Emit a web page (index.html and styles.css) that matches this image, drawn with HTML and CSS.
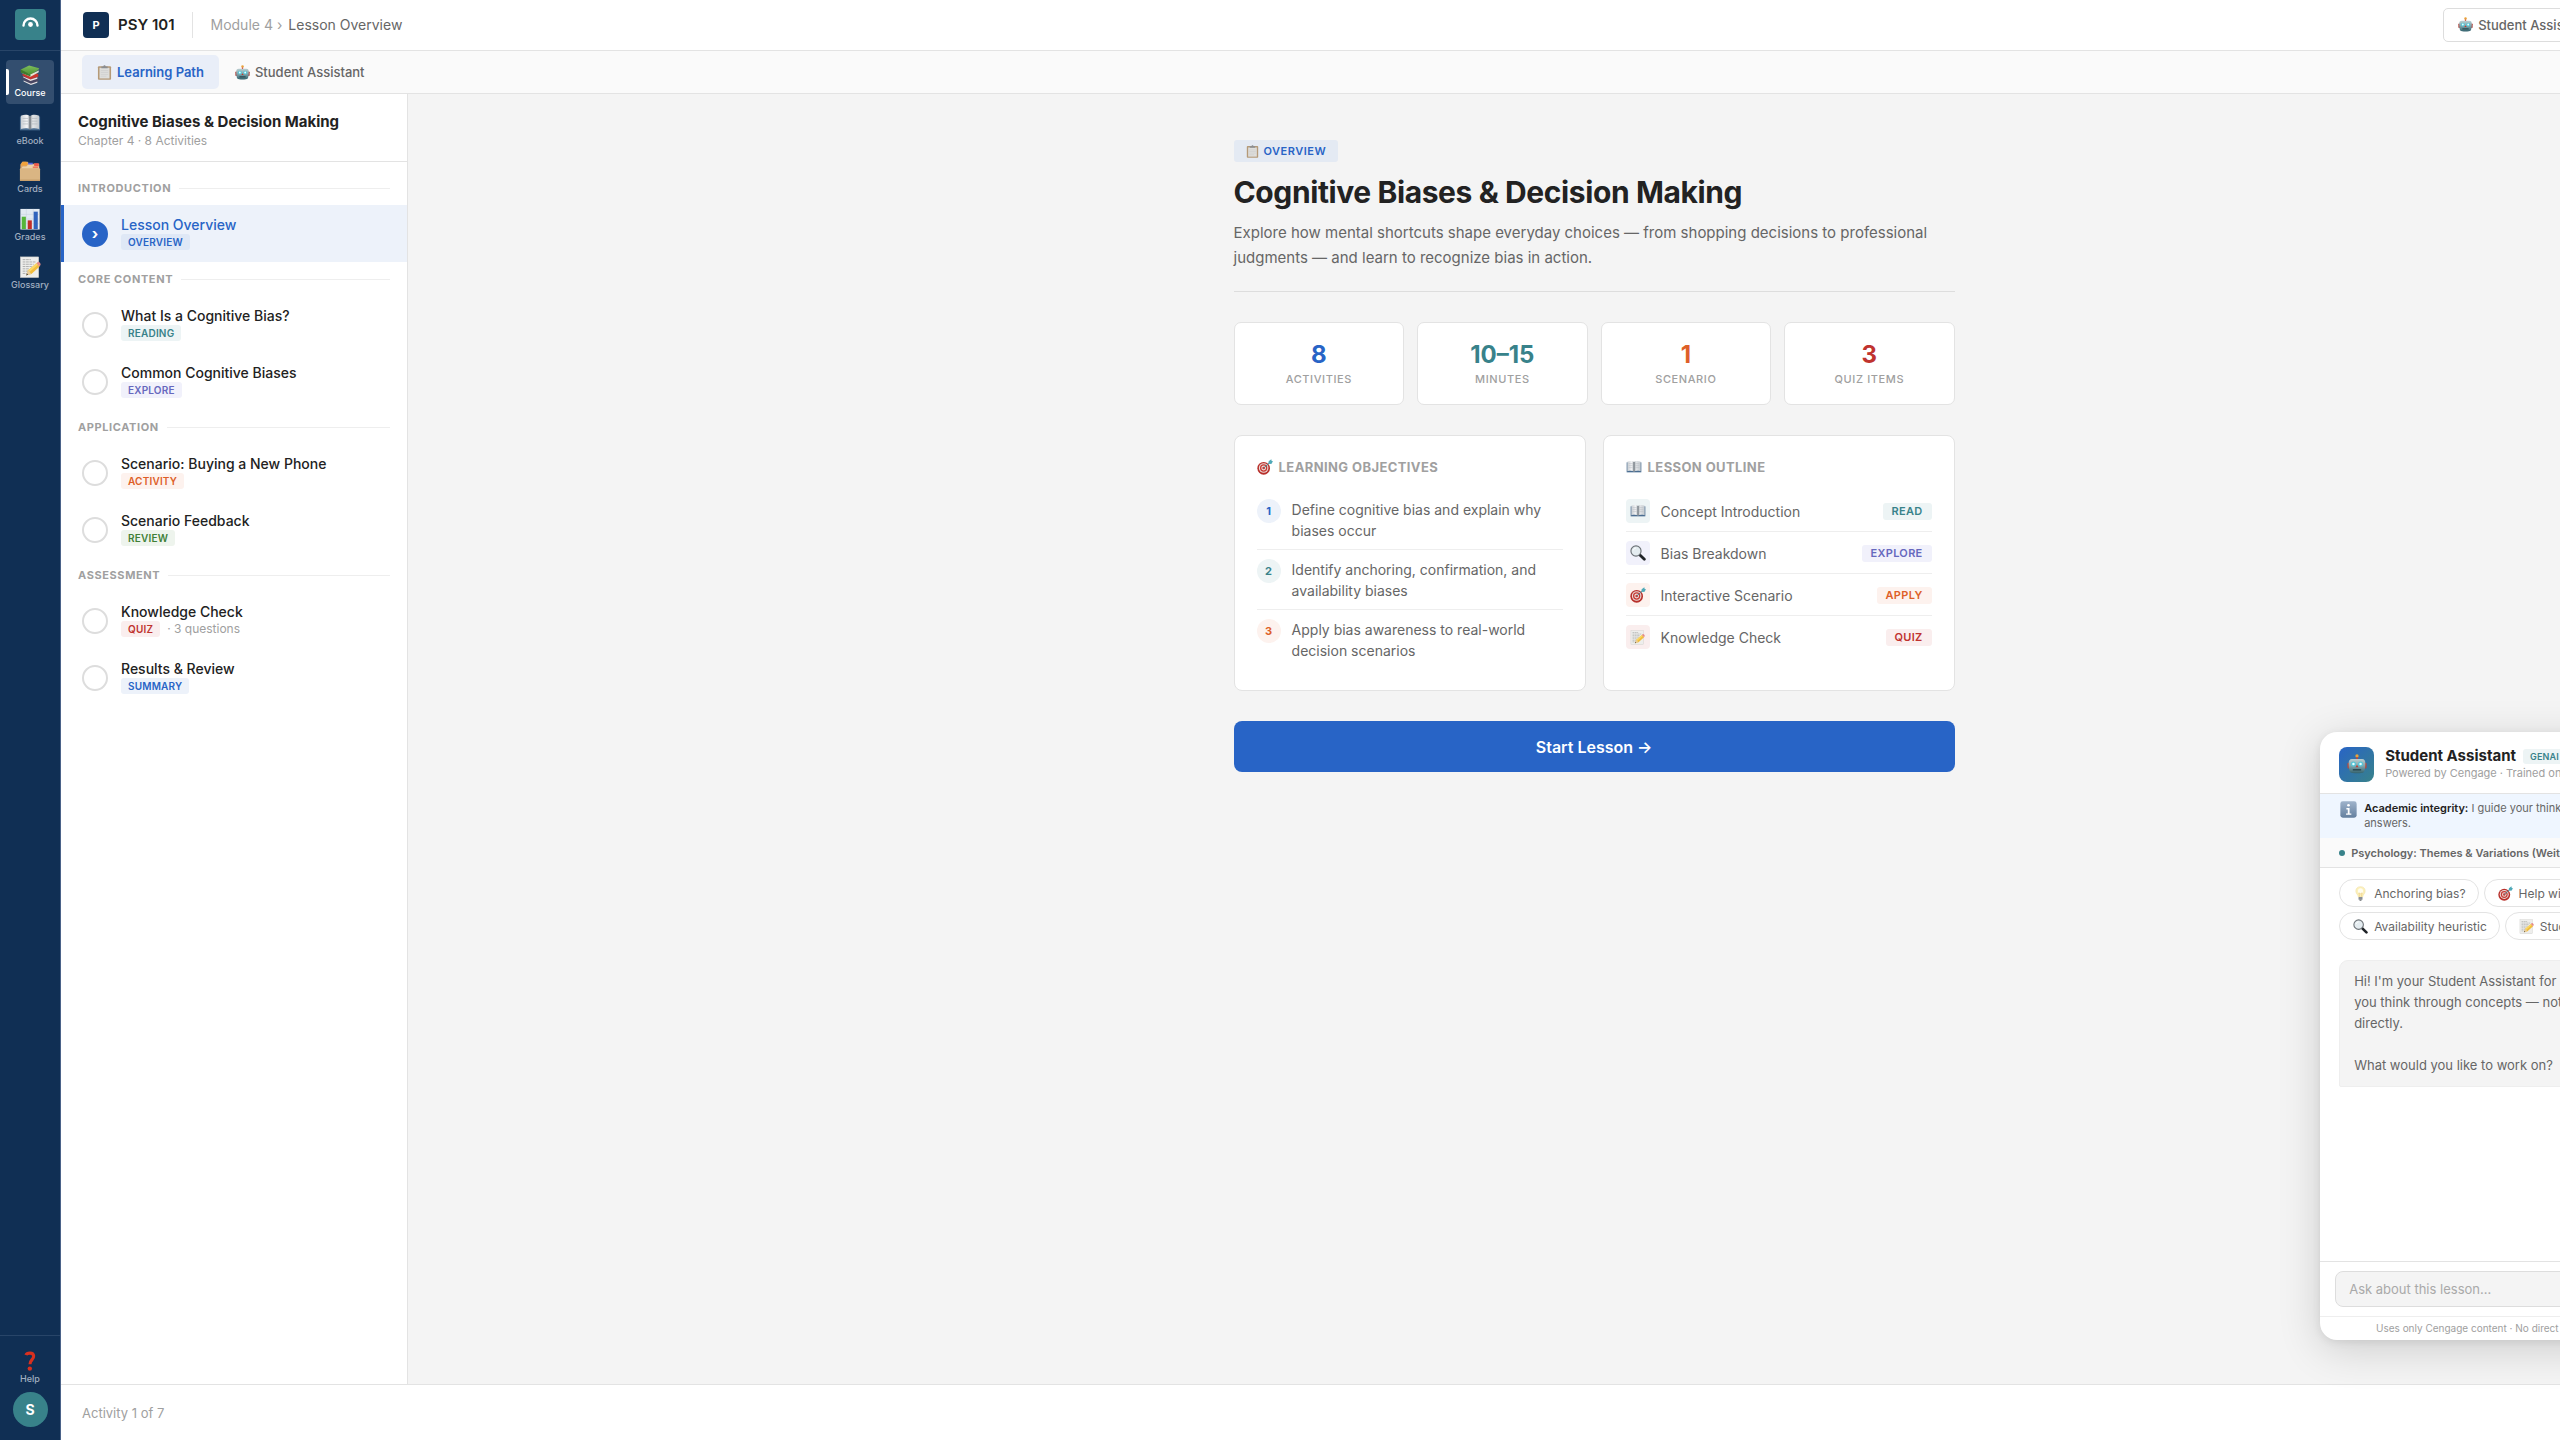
FILE: index.html
```html
<!DOCTYPE html>
<html lang="en">
<head>
<meta charset="utf-8">
<title>PSY 101 – Lesson Overview</title>
<link rel="stylesheet" href="styles.css">
</head>
<body>
<svg class="sprite" aria-hidden="true">
  <defs>
    <linearGradient id="g-robot" x1="0" y1="0" x2="0" y2="1"><stop offset="0" stop-color="#b9cdd0"/><stop offset=".5" stop-color="#7fa3ab"/><stop offset="1" stop-color="#33626d"/></linearGradient>
    <linearGradient id="g-page" x1="0" y1="0" x2="1" y2="0"><stop offset="0" stop-color="#c9ced3"/><stop offset=".35" stop-color="#f6f7f8"/><stop offset=".5" stop-color="#8e959c"/><stop offset=".65" stop-color="#e3e6e8"/><stop offset="1" stop-color="#c3c9ce"/></linearGradient>
    <linearGradient id="g-info" x1="0" y1="0" x2="0" y2="1"><stop offset="0" stop-color="#9fb3cb"/><stop offset="1" stop-color="#64809f"/></linearGradient>
    <linearGradient id="g-green" x1="0" y1="0" x2="0" y2="1"><stop offset="0" stop-color="#7fbf5a"/><stop offset="1" stop-color="#4b8f35"/></linearGradient>
  </defs>
  <symbol id="i-books" viewBox="0 0 24 24">
    <path d="M4 17l9 5 8-3v-3l-9-4-8 2z" fill="#4a4763"/><path d="M5 18l8 3.500 7-2.500v1.500l-7 2.500-8-4z" fill="#e9e4e4"/>
    <path d="M3 12l9 5 9-3v-3L11 8z" fill="#c8362f"/><path d="M4.500 13.500l8 3.500 7.500-2.500v1.500l-7.500 2.500-8-4z" fill="#efe5e2"/>
    <path d="M2 6l9-4.500 11 3-1 2-8.500 5.500L2 8z" fill="url(#g-green)"/><path d="M2.500 7.500l10 4 9-4.500v2l-9 5-10-4.500z" fill="#dfe9d8"/><path d="M2 6v3.500l10.500 4v-2z" fill="#3f7a2e"/>
  </symbol>
  <symbol id="i-book" viewBox="0 0 24 24">
    <path d="M1 5h22v15H1z" fill="#4a6d91"/><path d="M2 4c4-1.500 8-1 10 .500 2-1.500 6-2 10-.500v14.500c-4-1-8-1-10 .500-2-1.500-6-1.500-10-.500z" fill="url(#g-page)"/>
    <path d="M4 7h6M4 10h6M4 13h6M14 7h6M14 10h6M14 13h6" stroke="#b4b9be" stroke-width=".8"/><path d="M12 4.500V19" stroke="#6e757c" stroke-width="1"/>
  </symbol>
  <symbol id="i-cards" viewBox="0 0 24 24">
    <path d="M1.500 5l2-3h6l1.500 2h11v8H1.500z" fill="#dba66b"/><path d="M2 6l2-4h4l2 4z" fill="#f2a23a"/><path d="M10 3h5v3h-5z" fill="#4f67e6"/><path d="M16.500 3.500h5v3h-5z" fill="#ef5a4c"/><path d="M4 7h4l2-2h6l1 2h5v3H2z" fill="#edd2a9"/><path d="M15 7h6v2h-6z" fill="#ef7a5f"/>
    <rect x="1" y="9" width="22" height="14" rx="1" fill="#dab583"/><path d="M1 22h22" stroke="#bd935f"/>
  </symbol>
  <symbol id="i-chart" viewBox="0 0 24 24">
    <rect x="1.500" y="1" width="21" height="22.500" fill="#e2eaf3"/><path d="M2 7h20M2 12h20M2 17h20M8 1v22M15.500 1v22" stroke="#c8d3df" stroke-width=".6"/>
    <path d="M3 9.500h4.500V23H3z" fill="#56b53a"/><path d="M9.500 13.500H14V23H9.500z" fill="#c22e28"/><path d="M16 4h4.500v19H16z" fill="#2f63bd"/>
  </symbol>
  <symbol id="i-memo" viewBox="0 0 24 24">
    <rect x="1.500" y="1" width="20" height="22.500" fill="#eeeeec" stroke="#c9c9c5" stroke-width=".6"/><path d="M4 4h9M4 6.500h14M4 9h12M4 11.500h10M4 14h7M4 16.500h6M4 19h5" stroke="#a9aaa8" stroke-width="1" stroke-dasharray="3 .7"/>
    <path d="M8 21l2-5.500L19 8l3.500 3.500-9 8z" fill="#f2bd3c"/><path d="M10 15.500L19 8l1.500 1.500-9 8z" fill="#f9d766"/><path d="M19 8l1.500-1.500c1-.6 3.500 1.500 3 3L22.500 11.500z" fill="#e58a86"/><path d="M8 21l2-5.500 3.500 4z" fill="#e8cda0"/><path d="M7.800 21.200l.9-2 1.200 1.200z" fill="#333"/>
  </symbol>
  <symbol id="i-question" viewBox="0 0 24 24">
    <path d="M7.500 5.500C8.500 3 15.500 2 16 6.500c.3 4-4 4-4 9" fill="none" stroke="#d8301f" stroke-width="3.400"/><circle cx="11.800" cy="20.300" r="2.400" fill="#d8301f"/>
  </symbol>
  <symbol id="i-clipboard" viewBox="0 0 24 24">
    <rect x="1.500" y="2" width="21" height="21.500" rx="1.500" fill="#b59a78"/><rect x="4" y="4.500" width="16" height="17" fill="#dededc"/><path d="M6 9h12M6 12h12M6 15h12M6 18h9" stroke="#c9caca" stroke-width=".9"/><path d="M7 2.500h3l1-2h2l1 2h3V5H7z" fill="#8b8e92"/>
  </symbol>
  <symbol id="i-robot" viewBox="0 0 24 24">
    <circle cx="12" cy="2.300" r="2" fill="#e8a33a"/><path d="M11 4h2v3h-2z" fill="#d33f2c"/><rect x=".5" y="10.500" width="3" height="7" rx="1.200" fill="#b14b43"/><rect x="20.500" y="10.500" width="3" height="7" rx="1.200" fill="#b14b43"/>
    <path d="M6 6h12c3 0 4 2 4 5 0 4-.5 9-2 11-1 1.500-15 1.500-16 0-1.500-2-2-7-2-11 0-3 1-5 4-5z" fill="url(#g-robot)"/>
    <circle cx="7.700" cy="12" r="3" fill="#54c6d8"/><circle cx="16.300" cy="12" r="3" fill="#54c6d8"/><circle cx="7.700" cy="12" r="1.500" fill="#e8ffff"/><circle cx="16.300" cy="12" r="1.500" fill="#e8ffff"/><path d="M12 13l1.700 3h-3.400z" fill="#bf3b30"/><path d="M7 19h10" stroke="#23434b" stroke-width="1.600"/>
  </symbol>
  <symbol id="i-target" viewBox="0 0 24 24">
    <ellipse cx="10" cy="14" rx="9.500" ry="9.500" fill="#b8302b"/><circle cx="10" cy="13.500" r="7.200" fill="#e9dcd9"/><circle cx="10" cy="13.500" r="5.500" fill="#c73a34"/><circle cx="10" cy="13.500" r="3.600" fill="#ecdedb"/><circle cx="10" cy="13.500" r="2" fill="#c73a34"/>
    <path d="M10 13.500l9-8" stroke="#4d7f8a" stroke-width="1.400"/><path d="M17 7l.5-3.500 4-3 .500 2.500 2 .500-2.500 4z" fill="#4fa9b8"/>
  </symbol>
  <symbol id="i-search" viewBox="0 0 24 24">
    <path d="M14.500 14.500l7 7" stroke="#1f2327" stroke-width="4.200" stroke-linecap="round"/><circle cx="9" cy="9" r="7.600" fill="#e4ecf0" stroke="#6b7176" stroke-width="1.700"/><path d="M5 8c.5-2 2-3.300 4-3.500" stroke="#fff" stroke-width="1.500" fill="none"/>
  </symbol>
  <symbol id="i-bulb" viewBox="0 0 24 24">
    <path d="M12 1c-5 0-7.500 3.500-7.500 7 0 4 3.500 5.500 4 9.500h7c.5-4 4-5.500 4-9.500 0-3.500-2.500-7-7.500-7z" fill="#fcf1bd" stroke="#efdc97" stroke-width=".8"/><ellipse cx="12" cy="8" rx="4" ry="4.500" fill="#fffdf0"/><path d="M10.500 17l-1-6 2.500 1.500 2.500-1.500-1 6" stroke="#ecc878" stroke-width="1" fill="none"/><rect x="8.800" y="17.500" width="6.400" height="4.500" rx="1" fill="#8b9095"/><path d="M10.500 22h3v1.500h-3z" fill="#55595d"/>
  </symbol>
  <symbol id="i-info" viewBox="0 0 24 24">
    <rect x=".5" y=".5" width="23" height="23" rx="3.500" fill="url(#g-info)"/><circle cx="12" cy="6" r="1.900" fill="#fff"/><path d="M9 10h4.500v7.500H16v2H8.500v-2H11V12H9z" fill="#fff"/>
  </symbol>
</svg>

<div class="app">
  <nav class="rail" aria-label="Primary">
    <div class="rail-top">
      <a class="logo" href="#" aria-label="Home"><svg viewBox="0 0 31 31"><path d="M8.500 16.500a7 7 0 0 1 14 0" fill="none" stroke="#fff" stroke-width="2.400" stroke-linecap="round"/><circle cx="15.500" cy="15.500" r="2.400" fill="#fff"/></svg></a>
    </div>
    <div class="rail-items">
      <a class="rail-item is-active" href="#"><svg class="rail-icon"><use href="#i-books"/></svg><span>Course</span></a>
      <a class="rail-item" href="#"><svg class="rail-icon"><use href="#i-book"/></svg><span>eBook</span></a>
      <a class="rail-item" href="#"><svg class="rail-icon"><use href="#i-cards"/></svg><span>Cards</span></a>
      <a class="rail-item" href="#"><svg class="rail-icon"><use href="#i-chart"/></svg><span>Grades</span></a>
      <a class="rail-item" href="#"><svg class="rail-icon"><use href="#i-memo"/></svg><span>Glossary</span></a>
    </div>
    <div class="rail-bottom">
      <a class="rail-item" href="#"><svg class="rail-icon"><use href="#i-question"/></svg><span>Help</span></a>
      <button class="avatar" type="button">S</button>
    </div>
  </nav>

  <div class="shell">
    <header class="topbar">
      <span class="course-mark">P</span>
      <strong class="course-name">PSY 101</strong>
      <nav class="crumbs" aria-label="Breadcrumb"><a href="#">Module 4</a><span>›</span><span class="crumb-current">Lesson Overview</span></nav>
      <div class="top-actions">
        <button class="assistant-button" type="button"><svg class="icon"><use href="#i-robot"/></svg>Student Assistant</button>
      </div>
    </header>

    <nav class="tabs" aria-label="Views">
      <button class="tab is-active" type="button"><svg class="icon"><use href="#i-clipboard"/></svg>Learning Path</button>
      <button class="tab" type="button"><svg class="icon"><use href="#i-robot"/></svg>Student Assistant</button>
    </nav>

    <div class="body">
      <aside class="path">
        <header class="path-header">
          <h2>Cognitive Biases &amp; Decision Making</h2>
          <p>Chapter 4 · 8 Activities</p>
        </header>
        <div class="path-list">
          <h3 class="group">Introduction</h3>
          <a class="step is-active" href="#"><span class="dot">›</span><span class="step-text"><span class="step-title">Lesson Overview</span><span class="step-meta"><span class="badge blue-deep">Overview</span></span></span></a>
          <h3 class="group">Core Content</h3>
          <a class="step" href="#"><span class="dot"></span><span class="step-text"><span class="step-title">What Is a Cognitive Bias?</span><span class="step-meta"><span class="badge teal">Reading</span></span></span></a>
          <a class="step" href="#"><span class="dot"></span><span class="step-text"><span class="step-title">Common Cognitive Biases</span><span class="step-meta"><span class="badge violet">Explore</span></span></span></a>
          <h3 class="group">Application</h3>
          <a class="step" href="#"><span class="dot"></span><span class="step-text"><span class="step-title">Scenario: Buying a New Phone</span><span class="step-meta"><span class="badge orange">Activity</span></span></span></a>
          <a class="step" href="#"><span class="dot"></span><span class="step-text"><span class="step-title">Scenario Feedback</span><span class="step-meta"><span class="badge green">Review</span></span></span></a>
          <h3 class="group">Assessment</h3>
          <a class="step" href="#"><span class="dot"></span><span class="step-text"><span class="step-title">Knowledge Check</span><span class="step-meta"><span class="badge red">Quiz</span>· 3 questions</span></span></a>
          <a class="step" href="#"><span class="dot"></span><span class="step-text"><span class="step-title">Results &amp; Review</span><span class="step-meta"><span class="badge blue">Summary</span></span></span></a>
        </div>
      </aside>

      <main class="main">
        <div class="lesson">
          <header class="lesson-header">
            <span class="lesson-tag"><svg class="icon"><use href="#i-clipboard"/></svg>Overview</span>
            <h1>Cognitive Biases &amp; Decision Making</h1>
            <p>Explore how mental shortcuts shape everyday choices — from shopping decisions to professional judgments — and learn to recognize bias in action.</p>
          </header>
          <section class="stats" aria-label="Lesson facts">
            <div class="stat"><strong class="ink-blue">8</strong><span>Activities</span></div>
            <div class="stat"><strong class="ink-teal">10–15</strong><span>Minutes</span></div>
            <div class="stat"><strong class="ink-orange">1</strong><span>Scenario</span></div>
            <div class="stat"><strong class="ink-red">3</strong><span>Quiz Items</span></div>
          </section>
          <div class="panels">
            <section class="panel">
              <h2><svg class="icon icon-lg"><use href="#i-target"/></svg>Learning Objectives</h2>
              <ol class="rows">
                <li class="row row-top"><span class="num blue">1</span><span class="row-text">Define cognitive bias and explain why biases occur</span></li>
                <li class="row row-top"><span class="num teal">2</span><span class="row-text">Identify anchoring, confirmation, and availability biases</span></li>
                <li class="row row-top"><span class="num orange">3</span><span class="row-text">Apply bias awareness to real-world decision scenarios</span></li>
              </ol>
            </section>
            <section class="panel">
              <h2><svg class="icon icon-lg"><use href="#i-book"/></svg>Lesson Outline</h2>
              <ul class="rows">
                <li class="row"><span class="tile teal"><svg class="icon icon-lg"><use href="#i-book"/></svg></span><span class="row-text">Concept Introduction</span><span class="badge badge-lg teal">Read</span></li>
                <li class="row"><span class="tile violet"><svg class="icon icon-lg"><use href="#i-search"/></svg></span><span class="row-text">Bias Breakdown</span><span class="badge badge-lg violet">Explore</span></li>
                <li class="row"><span class="tile orange"><svg class="icon icon-lg"><use href="#i-target"/></svg></span><span class="row-text">Interactive Scenario</span><span class="badge badge-lg orange">Apply</span></li>
                <li class="row"><span class="tile red"><svg class="icon"><use href="#i-memo"/></svg></span><span class="row-text">Knowledge Check</span><span class="badge badge-lg red">Quiz</span></li>
              </ul>
            </section>
          </div>
          <button class="start" type="button">Start Lesson →</button>
        </div>
      </main>
    </div>

    <footer class="footer">Activity 1 of 7</footer>
  </div>

  <section class="chat" aria-label="Student Assistant">
    <header class="chat-header">
      <span class="chat-icon"><svg><use href="#i-robot"/></svg></span>
      <div>
        <h2>Student Assistant <span class="badge teal">GenAI</span></h2>
        <p>Powered by Cengage · Trained on your textbook</p>
      </div>
    </header>
    <div class="notice"><svg><use href="#i-info"/></svg><p><strong>Academic integrity:</strong> I guide your thinking — I don't give direct answers.</p></div>
    <div class="source">Psychology: Themes &amp; Variations (Weiten)</div>
    <div class="chips">
      <button type="button"><svg class="icon"><use href="#i-bulb"/></svg>Anchoring bias?</button>
      <button type="button"><svg class="icon"><use href="#i-target"/></svg>Help with scenario</button>
      <button type="button"><svg class="icon"><use href="#i-search"/></svg>Availability heuristic</button>
      <button type="button"><svg class="icon"><use href="#i-memo"/></svg>Study for quiz</button>
    </div>
    <div class="messages">
      <div class="bubble"><p>Hi! I'm your Student Assistant for Chapter 4. I'll help you think through concepts — not give you answers directly.</p><p>What would you like to work on?</p></div>
    </div>
    <form class="ask"><input type="text" aria-label="Ask about this lesson" placeholder="Ask about this lesson..."></form>
    <p class="chat-foot">Uses only Cengage content · No direct answers to graded questions</p>
  </section>
</div>
</body>
</html>
```
FILE: styles.css
```css
:root {
  --navy: #102f54;
  --blue: #2864c6;
  --teal: #38828a;
  --orange: #de5f28;
  --red: #c0332f;
  --violet: #6668be;
  --green: #418037;
  --ink: #222;
  --text: #666;
  --muted: #a0a0a0;
  --line: #e3e3e3;
  --line-soft: #eee;
}

* { box-sizing: border-box; }

html, body { height: 100%; }

body {
  margin: 0;
  overflow: hidden;
  font-family: Inter, "Liberation Sans", sans-serif;
  font-size: 14px;
  color: var(--text);
  background: #f4f4f4;
}

h1, h2, h3, p, ol, ul { margin: 0; padding: 0; }
ul, ol { list-style: none; }
a { color: inherit; text-decoration: none; }
button, input { font: inherit; color: inherit; }

.sprite { position: absolute; width: 0; height: 0; }
.icon { width: 15px; height: 15px; flex: none; }
.icon-lg { width: 16px; height: 16px; }

/* The shell runs a little wider than the window and is clipped by the body */
.app { position: relative; display: flex; width: 108.6vw; height: 100vh; }

/* Navigation rail */
.rail {
  display: flex;
  flex-direction: column;
  flex: none;
  width: 61px;
  background: var(--navy);
  border-right: 1px solid #4a6288;
}
.rail-top {
  display: flex;
  align-items: center;
  justify-content: center;
  height: 51px;
  padding-bottom: 1px;
  border-bottom: 1px solid #284568;
}
.logo { width: 31px; height: 31px; border-radius: 4px; background: var(--teal); }
.logo svg { display: block; }
.rail-items { display: flex; flex-direction: column; flex: 1; gap: 4px; padding: 9px 6px; }
.rail-item {
  position: relative;
  display: flex;
  flex-direction: column;
  align-items: center;
  gap: 1px;
  height: 44px;
  padding-top: 4px;
  border-radius: 4px;
  font-size: 9px;
  line-height: 12px;
  font-weight: 500;
  color: #a3b0c1;
}
.rail-item.is-active { background: #334e6f; color: #fff; }
.rail-item.is-active::before {
  content: "";
  position: absolute;
  left: 0;
  top: 9px;
  width: 3px;
  height: 26px;
  border-radius: 0 2px 2px 0;
  background: #fff;
}
.rail-icon { width: 22px; height: 22px; }
.rail-bottom {
  display: flex;
  flex-direction: column;
  align-items: center;
  padding: 10px 0 13px;
  gap: 2px;
  border-top: 1px solid #284568;
}
.avatar {
  width: 35px;
  height: 35px;
  padding: 0;
  border: 0;
  border-radius: 50%;
  background: var(--teal);
  color: #fff;
  font-size: 14px;
  font-weight: 700;
}

/* Page frame */
.shell { display: flex; flex-direction: column; flex: 1; min-width: 0; }
.topbar {
  display: flex;
  align-items: center;
  height: 51px;
  padding: 0 22px 1px;
  background: #fff;
  border-bottom: 1px solid var(--line);
}
.course-mark {
  display: flex;
  align-items: center;
  justify-content: center;
  width: 26px;
  height: 26px;
  border-radius: 4px;
  background: var(--navy);
  color: #fff;
  font-size: 11px;
  font-weight: 700;
}
.course-name { margin-left: 9px; font-size: 15px; font-weight: 600; color: var(--ink); }
.crumbs {
  display: flex;
  align-items: center;
  gap: 4px;
  height: 26px;
  margin-left: 17px;
  padding-left: 18px;
  border-left: 1px solid var(--line);
  font-size: 14px;
  color: var(--muted);
}
.crumb-current { margin-left: 2px; color: var(--text); }
.top-actions { display: flex; width: 315px; margin-left: auto; }
.assistant-button, .tab {
  display: flex;
  align-items: center;
  gap: 5px;
  height: 34px;
  padding: 0 14px;
  border: 1px solid #ddd;
  border-radius: 5px;
  background: #fff;
  font-size: 13px;
  font-weight: 500;
}
.tabs {
  display: flex;
  align-items: center;
  gap: 1px;
  height: 43px;
  padding: 0 21px;
  background: #fafafa;
  border-bottom: 1px solid var(--line);
}
.tab { border-color: transparent; background: none; }
.tab.is-active { background: #e9eef8; color: var(--blue); font-weight: 600; }
.body { display: flex; flex: 1; min-height: 0; }

/* Learning path */
.path { flex: none; width: 347px; background: #fff; border-right: 1px solid var(--line); }
.path-header { padding: 18px 17px 12px; border-bottom: 1px solid var(--line); }
.path-header h2 { font-size: 15px; line-height: 20px; font-weight: 700; color: var(--ink); }
.path-header p { font-size: 12px; line-height: 17px; color: var(--muted); }
.path-list { padding-top: 9px; }
.group {
  display: flex;
  align-items: center;
  gap: 8px;
  height: 34px;
  padding: 0 17px;
  font-size: 11px;
  font-weight: 700;
  letter-spacing: 0.6px;
  text-transform: uppercase;
  color: var(--muted);
}
.group::after { content: ""; flex: 1; height: 1px; background: var(--line-soft); }
.step {
  display: flex;
  align-items: center;
  gap: 13px;
  height: 57px;
  padding: 0 18px;
  border-left: 3px solid transparent;
}
.step.is-active { background: #edf2fa; border-color: var(--blue); }
.dot {
  display: flex;
  align-items: center;
  justify-content: center;
  width: 26px;
  height: 26px;
  border: 2px solid #ddd;
  border-radius: 50%;
  color: #fff;
  font-size: 15px;
  line-height: 15px;
  font-weight: 700;
}
.is-active .dot { border-color: var(--blue); background: var(--blue); }
.step-text { display: flex; flex-direction: column; padding-bottom: 1px; }
.step-title { font-size: 14px; line-height: 18px; font-weight: 500; color: var(--ink); }
.is-active .step-title { color: var(--blue); }
.step-meta { display: flex; align-items: center; gap: 7px; font-size: 12px; line-height: 16px; color: var(--muted); }

.badge {
  display: inline-block;
  padding: 0 7px;
  border-radius: 3px;
  font-size: 10px;
  line-height: 16px;
  font-weight: 600;
  letter-spacing: 0.2px;
  text-transform: uppercase;
}
.badge-lg { padding: 0 9px; font-size: 11px; line-height: 17px; letter-spacing: 0.3px; }
.blue { background: #edf2fa; color: var(--blue); }
.blue-deep { background: #dfe8f6; color: var(--blue); }
.teal { background: #edf4f5; color: var(--teal); }
.violet { background: #f1f1fb; color: var(--violet); }
.orange { background: #fdf2ee; color: var(--orange); }
.green { background: #eef4ed; color: var(--green); }
.red { background: #faeeee; color: var(--red); }

/* Lesson */
.main { flex: 1; padding-top: 46px; background: #f4f4f4; }
.lesson { width: 721px; margin: 0 auto; }
.lesson-header { padding-bottom: 21px; border-bottom: 1px solid #ddd; }
.lesson-tag {
  display: inline-flex;
  align-items: center;
  gap: 5px;
  height: 22px;
  padding: 0 12px;
  border-radius: 3px;
  background: #e4eaf3;
  color: var(--blue);
  font-size: 11px;
  font-weight: 600;
  letter-spacing: 0.5px;
  text-transform: uppercase;
}
.lesson-tag .icon { width: 13px; height: 13px; }
h1 { margin: 12px 0 10px; font-size: 30px; line-height: 36px; font-weight: 700; letter-spacing: -0.4px; color: var(--ink); }
.lesson-header p { font-size: 15px; line-height: 25px; }
.stats { display: grid; grid-template-columns: repeat(4, 1fr); gap: 13px; margin-top: 30px; }
.stat {
  display: flex;
  flex-direction: column;
  align-items: center;
  height: 83px;
  padding-top: 17px;
  border: 1px solid var(--line);
  border-radius: 7px;
  background: #fff;
}
.stat strong { font-size: 24px; line-height: 30px; font-weight: 700; }
.stat span { font-size: 11px; line-height: 18px; font-weight: 500; letter-spacing: 0.6px; text-transform: uppercase; color: var(--muted); }
.ink-blue { color: var(--blue); }
.ink-teal { color: var(--teal); }
.ink-orange { color: var(--orange); }
.ink-red { color: var(--red); }

.panels { display: grid; grid-template-columns: 1fr 1fr; gap: 17px; margin-top: 30px; }
.panel { padding: 22px 22px 20px; border: 1px solid var(--line); border-radius: 8px; background: #fff; }
.panel h2 {
  display: flex;
  align-items: center;
  gap: 6px;
  margin-bottom: 14px;
  font-size: 13px;
  line-height: 18px;
  font-weight: 700;
  letter-spacing: 0.4px;
  text-transform: uppercase;
  color: var(--muted);
}
.row {
  display: flex;
  align-items: center;
  gap: 11px;
  padding: 9px 0 8px;
  border-bottom: 1px solid var(--line-soft);
}
.row:last-child { border-color: transparent; }
.row-top { align-items: flex-start; }
.row-text { flex: 1; font-size: 14px; line-height: 21px; }
.num, .tile { display: flex; align-items: center; justify-content: center; flex: none; width: 24px; height: 24px; }
.num { border-radius: 50%; font-size: 11px; font-weight: 700; }
.tile { border-radius: 4px; }
.start {
  display: block;
  width: 100%;
  height: 51px;
  margin-top: 30px;
  border: 0;
  border-radius: 8px;
  background: var(--blue);
  color: #fff;
  font-size: 16px;
  font-weight: 600;
}

.footer {
  display: flex;
  align-items: center;
  height: 56px;
  padding: 0 21px;
  border-top: 1px solid var(--line);
  background: #fff;
  font-size: 13px;
  color: var(--muted);
}

/* Floating assistant */
.chat {
  position: absolute;
  right: 26px;
  bottom: 100px;
  display: flex;
  flex-direction: column;
  width: 434px;
  height: 608px;
  border-radius: 17px;
  background: #fff;
  box-shadow: 0 9px 43px rgba(0, 0, 0, 0.16), 0 2px 9px rgba(0, 0, 0, 0.08);
  overflow: hidden;
}
.chat-header { display: flex; align-items: center; gap: 11px; height: 62px; padding: 3px 19px 0; border-bottom: 1px solid var(--line); }
.chat-icon {
  display: flex;
  align-items: center;
  justify-content: center;
  width: 35px;
  height: 35px;
  border-radius: 8px;
  background: linear-gradient(135deg, var(--blue), var(--teal));
}
.chat-icon svg { width: 20px; height: 20px; }
.chat h2 { display: flex; align-items: center; gap: 7px; font-size: 15px; line-height: 18px; font-weight: 700; color: var(--ink); }
.chat h2 .badge { font-size: 9px; line-height: 15px; }
.chat-header p { font-size: 11px; line-height: 16px; color: var(--muted); }
.notice { display: flex; gap: 7px; padding: 7px 20px; background: #eff6ff; font-size: 11px; line-height: 15px; }
.notice svg { flex: none; width: 17px; height: 17px; }
.notice strong { font-weight: 600; color: var(--ink); }
.source {
  display: flex;
  align-items: center;
  gap: 6px;
  height: 30px;
  padding: 0 19px;
  background: #fafafa;
  border-bottom: 1px solid var(--line);
  font-size: 11px;
  font-weight: 600;
}
.source::before { content: ""; width: 6px; height: 6px; border-radius: 50%; background: var(--teal); }
.chips { display: flex; flex-wrap: wrap; gap: 5px; padding: 11px 19px; }
.chips button {
  display: flex;
  align-items: center;
  gap: 6px;
  height: 28px;
  padding: 0 12px 0 13px;
  border: 1px solid var(--line);
  border-radius: 14px;
  background: #fff;
  font-size: 12px;
}
.messages { flex: 1; padding: 9px 19px; }
.bubble { width: 360px; padding: 10px 14px; border: 1px solid #eee; border-radius: 9px 9px 9px 2px; background: #f4f4f4; font-size: 13px; line-height: 21px; }
.bubble p + p { margin-top: 21px; }
.ask { padding: 9px 15px; border-top: 1px solid var(--line); }
.ask input {
  display: block;
  width: 100%;
  height: 36px;
  padding: 0 13px;
  border: 1px solid #ddd;
  border-radius: 8px;
  background: #f4f4f4;
  font-size: 13px;
}
.ask input::placeholder { color: #a9a9a9; opacity: 1; }
.chat-foot { height: 24px; border-top: 1px solid var(--line-soft); font-size: 10px; line-height: 23px; text-align: center; color: var(--muted); }
```
